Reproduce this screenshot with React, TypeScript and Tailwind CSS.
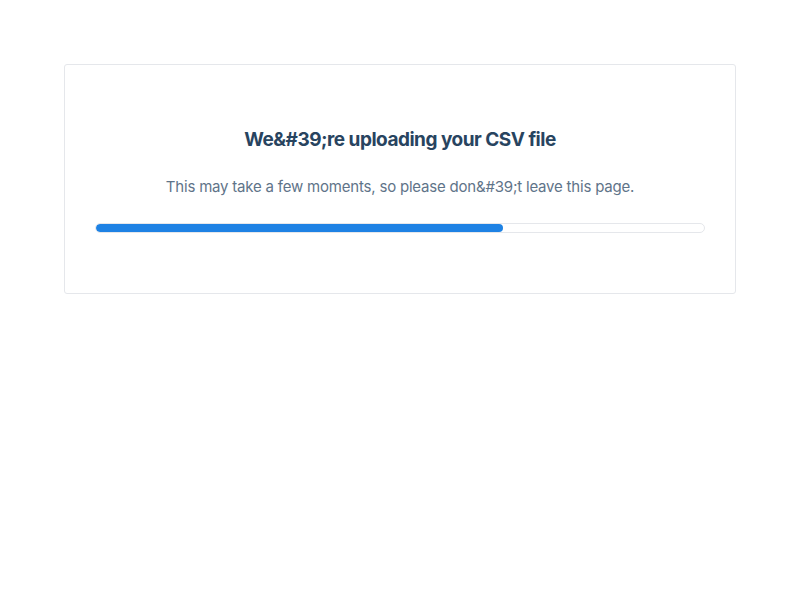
export default function App() {
  const progress = 67;

  return (
    <div className="w-full min-h-screen bg-white p-16 font-['Inter','Liberation_Sans',sans-serif]">
      <div className="border border-[#e5e7eb] rounded-[3px] bg-white px-[30px] pt-[61px] pb-[60px] flex flex-col items-center">
        <h1 className="text-[19px] leading-7 font-bold text-[#28445f] tracking-[-0.5px]">
          We&amp;#39;re uploading your CSV file
        </h1>
        <p className="mt-[21px] text-[15px] leading-6 text-[#5f7489] tracking-[-0.2px]">
          This may take a few moments, so please don&amp;#39;t leave this page.
        </p>
        <div className="mt-[24px] w-full h-[10px] rounded-full border border-[#e5e7eb] bg-white overflow-hidden">
          <div className="h-full rounded-full bg-[#1e82e4]" style={{ width: `${progress}%` }} />
        </div>
      </div>
    </div>
  );
}
